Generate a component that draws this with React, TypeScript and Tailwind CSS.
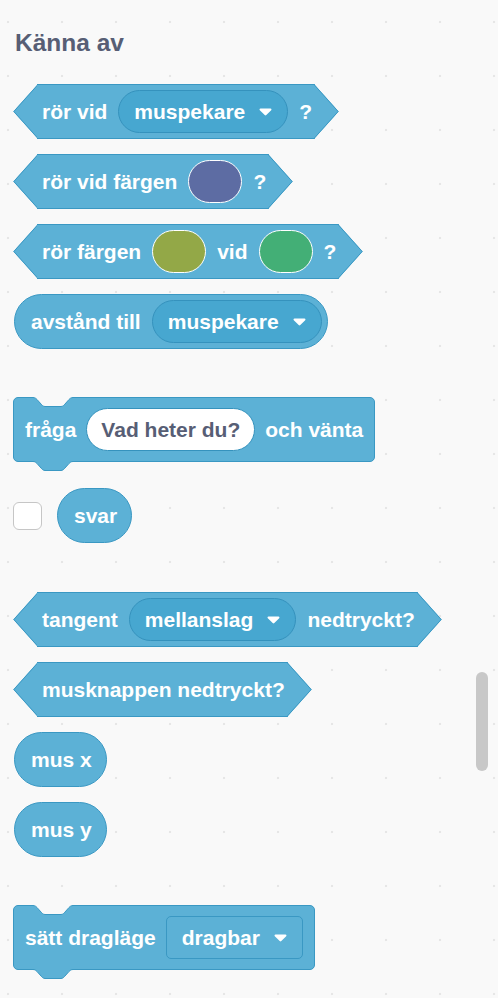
import type { ReactNode } from "react";

const BORDER = "#3a98c3";

function Arrow() {
  return (
    <svg width="13" height="8" viewBox="0 0 13 8" className="shrink-0">
      <path
        d="M1.5 0.6 H11.5 C12.4 0.6 12.8 1.6 12.2 2.2 L7.3 7 C6.8 7.5 6.2 7.5 5.7 7 L0.8 2.2 C0.2 1.6 0.6 0.6 1.5 0.6 Z"
        fill="white"
      />
    </svg>
  );
}

function Dropdown({ label, square }: { label: string; square?: boolean }) {
  return (
    <div
      className={`flex h-[43px] items-center gap-[14px] border pl-[15px] pr-[15px] ${
        square ? "rounded-[5px] border-[#3a98c3] bg-[#5cb1d6]" : "rounded-full border-[#3592bd] bg-[#47a7d0]"
      }`}
    >
      <span>{label}</span>
      <Arrow />
    </div>
  );
}

function Swatch({ color }: { color: string }) {
  return <div className={`h-[43px] w-[54px] rounded-full border-[1.5px] border-white ${color}`} />;
}

function Bool({ children, className = "" }: { children: ReactNode; className?: string }) {
  return (
    <div className={`flex h-[55px] ${className}`}>
      <svg width="25" height="55" viewBox="0 0 25 55" className="-mr-px shrink-0">
        <path d="M25 0 L0.4 27.5 L25 55 Z" fill="#5cb1d6" />
        <path d="M25 0.5 L0.8 27.5 L25 54.5" fill="none" stroke={BORDER} strokeWidth="1" />
      </svg>
      <div className="flex items-center gap-[11px] border-y border-[#3a98c3] bg-[#5cb1d6] pl-[5px] pr-[3px]">
        {children}
      </div>
      <svg width="25" height="55" viewBox="0 0 25 55" className="-ml-px shrink-0">
        <path d="M0 0 L24.6 27.5 L0 55 Z" fill="#5cb1d6" />
        <path d="M0 0.5 L24.2 27.5 L0 54.5" fill="none" stroke={BORDER} strokeWidth="1" />
      </svg>
    </div>
  );
}

function Reporter({ children, className = "" }: { children: ReactNode; className?: string }) {
  return (
    <div
      className={`flex h-[55px] items-center gap-[11px] rounded-full border border-[#3a98c3] bg-[#5cb1d6] pl-[16px] ${className}`}
    >
      {children}
    </div>
  );
}

function Stack({ children, className = "" }: { children: ReactNode; className?: string }) {
  return (
    <div
      className={`relative flex h-[65px] items-center gap-[10px] rounded-[5px] border border-[#3a98c3] bg-[#5cb1d6] pl-[11px] pr-[11px] ${className}`}
    >
      {/* top notch */}
      <svg width="40" height="11" viewBox="0 0 40 11" className="absolute left-[19px] top-[-1px]">
        <path
          d="M0 0 V0.5 C2 0.5 3 1.5 4 2.5 L8 7 C9 8 10 9.5 12 9.5 H28 C30 9.5 31 8 32 7 L36 2.5 C37 1.5 38 0.5 40 0.5 V0 Z"
          fill="#f9f9f9"
        />
        <path
          d="M0 0.5 C2 0.5 3 1.5 4 2.5 L8 7 C9 8 10 9.5 12 9.5 H28 C30 9.5 31 8 32 7 L36 2.5 C37 1.5 38 0.5 40 0.5"
          fill="none"
          stroke={BORDER}
        />
      </svg>
      {/* bottom tab */}
      <svg width="40" height="12" viewBox="0 0 40 12" className="absolute bottom-[-11px] left-[19px]">
        <path
          d="M0 0 V1.5 C2 1.5 3 2.5 4 3.5 L8 8 C9 9 10 10.5 12 10.5 H28 C30 10.5 31 9 32 8 L36 3.5 C37 2.5 38 1.5 40 1.5 V0 Z"
          fill="#5cb1d6"
        />
        <path
          d="M0 1.5 C2 1.5 3 2.5 4 3.5 L8 8 C9 9 10 10.5 12 10.5 H28 C30 10.5 31 9 32 8 L36 3.5 C37 2.5 38 1.5 40 1.5"
          fill="none"
          stroke={BORDER}
        />
      </svg>
      {children}
    </div>
  );
}

export default function App() {
  return (
    <div className="relative h-[998px] w-[498px] overflow-hidden bg-[#f9f9f9] bg-[radial-gradient(circle,#e6e6e6_1px,transparent_1.6px)] bg-[length:54px_54px] bg-[position:-19px_-5px] font-['Liberation_Sans',Arial,sans-serif]">
      <div className="flex flex-col items-start pl-[13px] pt-[31px] text-[21px] font-bold leading-none text-white">
        <h1 className="ml-[2px] text-[24.5px] leading-[24px] text-[#575e75]">Känna av</h1>

        <Bool className="mt-[29px]">
          <span>rör vid</span>
          <Dropdown label="muspekare" />
          <span>?</span>
        </Bool>

        <Bool className="mt-[15px]">
          <span>rör vid färgen</span>
          <Swatch color="bg-[#5d6ca3]" />
          <span>?</span>
        </Bool>

        <Bool className="mt-[15px]">
          <span>rör färgen</span>
          <Swatch color="bg-[#93a847]" />
          <span>vid</span>
          <Swatch color="bg-[#43af76]" />
          <span>?</span>
        </Bool>

        <Reporter className="ml-px mt-[15px] pr-[5px]">
          <span>avstånd till</span>
          <Dropdown label="muspekare" />
        </Reporter>

        <Stack className="mt-[48px]">
          <span>fråga</span>
          <div className="flex h-[43px] items-center rounded-full border border-[#3592bd] bg-white px-[14px] text-[#575e75]">
            Vad heter du?
          </div>
          <span>och vänta</span>
        </Stack>

        <div className="mt-[26px] flex items-center gap-[15px]">
          <div className="h-[28px] w-[29px] rounded-[6px] border border-[#c6c6c6] bg-white" />
          <Reporter className="pr-[14px]">
            <span>svar</span>
          </Reporter>
        </div>

        <Bool className="mt-[49px]">
          <span>tangent</span>
          <Dropdown label="mellanslag" />
          <span>nedtryckt?</span>
        </Bool>

        <Bool className="mt-[15px]">
          <span>musknappen nedtryckt?</span>
        </Bool>

        <Reporter className="ml-px mt-[15px] pr-[14px]">
          <span>mus x</span>
        </Reporter>

        <Reporter className="ml-px mt-[15px] pr-[14px]">
          <span>mus y</span>
        </Reporter>

        <Stack className="mt-[48px]">
          <span>sätt dragläge</span>
          <Dropdown label="dragbar" square />
        </Stack>
      </div>

      {/* scrollbar */}
      <div className="absolute left-[476px] top-[672px] h-[99px] w-[12px] rounded-full bg-[#c8c8c8]" />
    </div>
  );
}
